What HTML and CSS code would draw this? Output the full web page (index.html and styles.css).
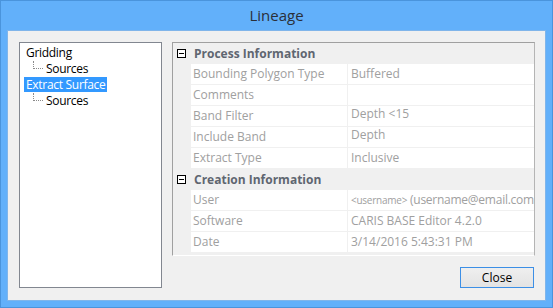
FILE: index.html
```html
<!DOCTYPE html>
<html lang="en">
<head>
    <meta charset="utf-8">
    <title>Lineage</title>
    <link rel="stylesheet" href="styles.css">
</head>
<body>
    <div class="window">
        <div class="titlebar">Lineage</div>
        <div class="client">
            <div class="tree">
                <div class="node"><span class="label">Gridding</span></div>
                <div class="node child"><span class="branch"></span><span class="label">Sources</span></div>
                <div class="node"><span class="label selected">Extract Surface</span></div>
                <div class="node child"><span class="branch"></span><span class="label">Sources</span></div>
            </div>

            <div class="side">
                <div class="grid">
                    <div class="category">
                        <span class="toggle"></span>
                        <span class="cat-name">Process Information</span>
                    </div>
                    <div class="prop"><div class="margin"></div><div class="name">Bounding Polygon Type</div><div class="value">Buffered</div></div>
                    <div class="prop"><div class="margin"></div><div class="name">Comments</div><div class="value"></div></div>
                    <div class="prop"><div class="margin"></div><div class="name">Band Filter</div><div class="value raised">Depth &lt;15</div></div>
                    <div class="prop"><div class="margin"></div><div class="name">Include Band</div><div class="value raised">Depth</div></div>
                    <div class="prop"><div class="margin"></div><div class="name">Extract Type</div><div class="value">Inclusive</div></div>

                    <div class="category">
                        <span class="toggle"></span>
                        <span class="cat-name">Creation Information</span>
                    </div>
                    <div class="prop"><div class="margin"></div><div class="name">User</div><div class="value tight"><small>&lt;username&gt;</small> (username@email.com)</div></div>
                    <div class="prop"><div class="margin"></div><div class="name">Software</div><div class="value">CARIS BASE Editor 4.2.0</div></div>
                    <div class="prop"><div class="margin"></div><div class="name">Date</div><div class="value">3/14/2016 5:43:31 PM</div></div>
                </div>

                <div class="buttons">
                    <button class="btn default">Close</button>
                </div>
            </div>
        </div>
    </div>
</body>
</html>
```

FILE: styles.css
```css
body {
    margin: 0;
    font-family: "Open Sans", "Noto Sans", sans-serif;
    font-size: 12px;
    color: #000;
}

.window {
    width: 553px;
    height: 308px;
    box-sizing: border-box;
    background: #62b0fa;
    border: 1px solid #4a94dc;
    padding: 0 6px 6px 6px;
    display: flex;
    flex-direction: column;
}

.titlebar {
    height: 29px;
    line-height: 29px;
    text-align: center;
    font-size: 15px;
    color: #2a2f38;
}

.client {
    flex: 1;
    display: flex;
    gap: 10px;
    background: #f0f0f0;
    border: 1px solid #80b5ea;
    padding: 11px 10px 12px 11px;
}

/* tree view */
.tree {
    flex: none;
    box-sizing: border-box;
    width: 143px;
    background: #fff;
    border: 1px solid #828790;
    padding: 1px 4px;
}

.node {
    display: flex;
    align-items: center;
    height: 16px;
}

.node .label {
    padding: 0 2px;
    line-height: 15px;
    white-space: nowrap;
    letter-spacing: -0.3px;
}

.node .selected {
    background: #3399ff;
    color: #fff;
}

.branch {
    align-self: flex-start;
    width: 9px;
    height: 7px;
    margin-top: 1px;
    margin-left: 9px;
    margin-right: 1px;
    border-left: 1px dotted #8a8a8a;
    border-bottom: 1px dotted #8a8a8a;
}

/* property grid */
.side {
    flex: 1;
    min-width: 0;
    display: flex;
    flex-direction: column;
}

.grid {
    height: 212px;
    background: #f0f0f0;
    border: 1px solid #a0a0a0;
    border-right-color: #b4b4b4;
    border-bottom-color: #fff;
    overflow: hidden;
}

.category {
    display: flex;
    align-items: center;
    height: 21px;
}

.toggle {
    position: relative;
    width: 7px;
    height: 7px;
    margin-left: 4px;
    margin-right: 8px;
    border: 1px solid #000;
    background: #fff;
}

.toggle::after {
    content: "";
    position: absolute;
    left: 1px;
    right: 1px;
    top: 3px;
    height: 1px;
    background: #000;
}

.cat-name {
    font-weight: bold;
    color: #5f6670;
}

.prop {
    display: flex;
    height: 21px;
    color: #a0a0a0;
}

.prop .margin {
    flex: none;
    width: 18px;
}

.prop .name {
    flex: none;
    width: 154px;
    padding-left: 2px;
    background: #fff;
    border-right: 1px solid #f0f0f0;
    border-bottom: 1px solid #f0f0f0;
    line-height: 20px;
    white-space: nowrap;
}

.prop .value {
    flex: 1;
    min-width: 0;
    padding-left: 3px;
    background: #fff;
    border-bottom: 1px solid #f0f0f0;
    line-height: 20px;
    white-space: nowrap;
    overflow: hidden;
}

.prop .value.raised {
    line-height: 16px;
}

.prop .value.tight {
    letter-spacing: -0.25px;
}

.prop small {
    font-size: 10px;
}

.buttons {
    margin-top: auto;
    display: flex;
    justify-content: flex-end;
    padding-right: 1px;
}

.btn {
    width: 74px;
    height: 21px;
    font-family: inherit;
    font-size: 12px;
    color: #000;
    background: linear-gradient(#efefef, #e3e3e3);
    border: 1px solid #acacac;
    padding: 0;
}

.btn.default {
    border-color: #3c8fe6;
}
```
